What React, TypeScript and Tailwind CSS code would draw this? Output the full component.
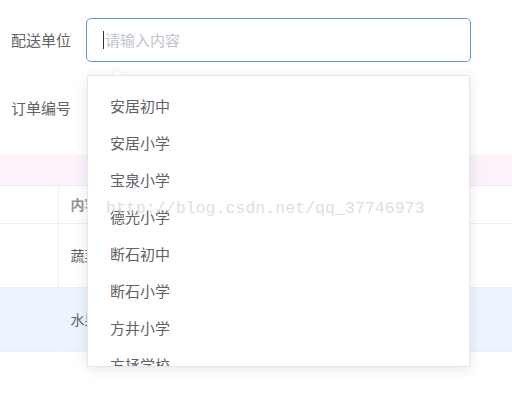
import React from "react";

const schools = [
  "安居初中",
  "安居小学",
  "宝泉小学",
  "德光小学",
  "断石初中",
  "断石小学",
  "方井小学",
  "方拯学校",
];

export default function App() {
  return (
    <div
      className="relative w-[512px] h-[396px] overflow-hidden bg-white text-[15px] text-[#606266]"
      style={{ fontFamily: '"Noto Sans CJK SC", "Noto Sans", sans-serif' }}
    >
      <div className="pt-[18px]">
        <div className="flex items-center h-[44px]">
          <label className="w-[86px] pl-[11px] shrink-0">配送单位</label>
          <div className="w-[385px] h-[44px] rounded-[5px] border border-[#5c9ee6] flex items-center pl-[16px]">
            <span className="w-px h-[18px] bg-[#333] mr-px" />
            <span className="text-[#c0c4cc]">请输入内容</span>
          </div>
        </div>
        <div className="flex items-center h-[44px] mt-[24px]">
          <label className="w-[86px] pl-[11px] shrink-0">订单编号</label>
        </div>
      </div>

      <div className="mt-[25px] h-[30px] bg-[#fcf2fb]" />

      <table className="w-full border-collapse text-[14px]">
        <tbody>
          <tr className="h-[38px] border-y border-[#ebeef5]">
            <td className="w-[58px] border-r border-[#ebeef5]" />
            <td className="pl-[12px] font-bold text-[#909399]">内容</td>
          </tr>
          <tr className="h-[64px] border-b border-[#ebeef5]">
            <td className="border-r border-[#ebeef5]" />
            <td className="pl-[12px]">蔬菜</td>
          </tr>
          <tr className="h-[64px] bg-[#ecf5ff] border-b border-[#ebeef5]">
            <td className="border-r border-[#ebeef5]" />
            <td className="pl-[12px]">水果</td>
          </tr>
        </tbody>
      </table>

      {/* autocomplete dropdown */}
      <div className="absolute left-[87px] top-[75px] w-[383px] h-[292px] bg-white border border-[#e4e7ed] shadow-[0_2px_12px_rgba(0,0,0,0.1)] overflow-hidden">
        <ul className="pt-[11px]">
          {schools.map((s) => (
            <li key={s} className="h-[37px] leading-[37px] pl-[22px] text-[15px] text-[#606266]">
              {s}
            </li>
          ))}
        </ul>
      </div>
      <div className="absolute left-[111px] top-[69px] w-0 h-0 border-x-[6px] border-x-transparent border-b-[6px] border-b-[#e4e7ed]" />
      <div className="absolute left-[112px] top-[70px] w-0 h-0 border-x-[5px] border-x-transparent border-b-[5px] border-b-white" />

      {/* blog watermark */}
      <div
        className="absolute left-[106px] top-[198px] text-[16.6px] leading-[22px] text-[#d6d6d6]/80 whitespace-nowrap pointer-events-none"
        style={{ fontFamily: '"Liberation Mono", monospace' }}
      >
        http://blog.csdn.net/qq_37746973
      </div>
    </div>
  );
}
